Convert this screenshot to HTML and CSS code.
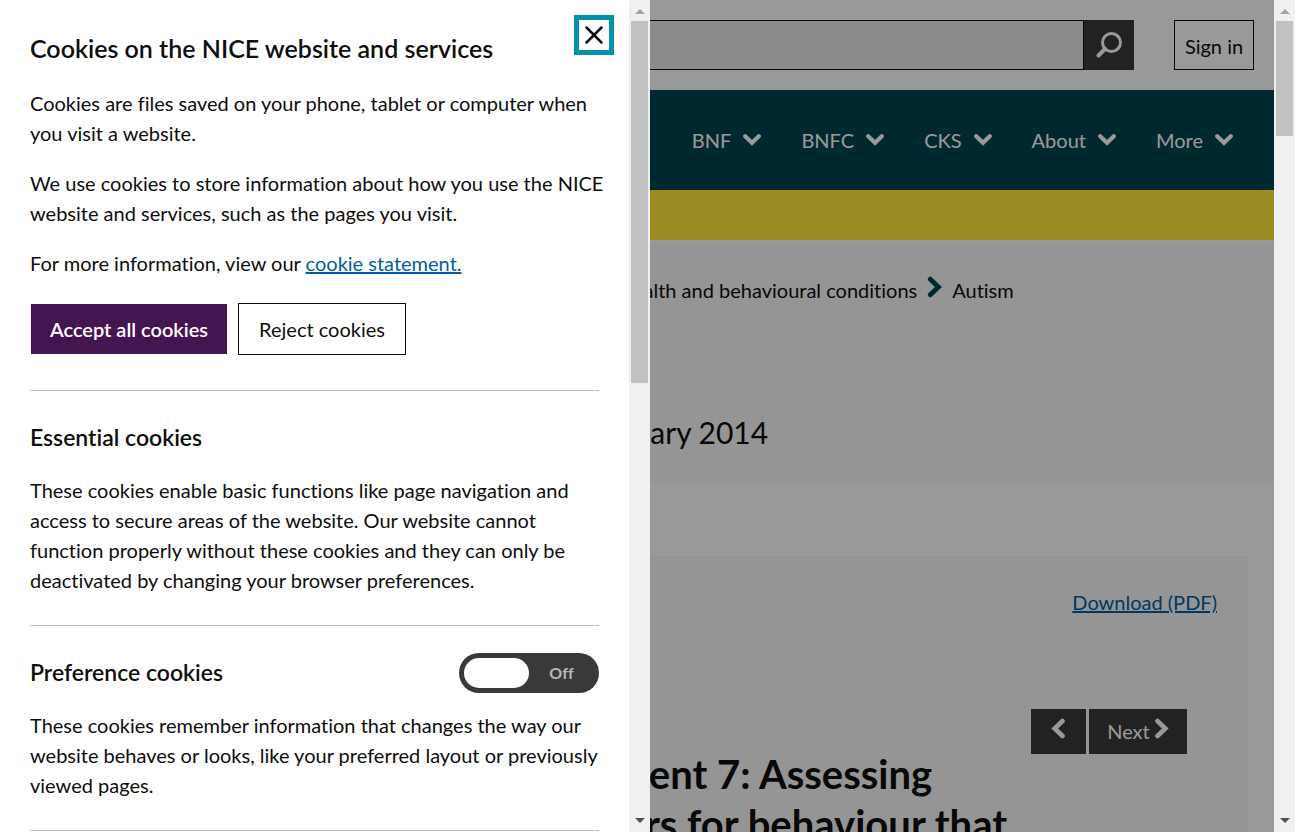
FILE: index.html
```
<!DOCTYPE html>
<html lang="en">
<head>
<meta charset="utf-8">
<meta name="viewport" content="width=device-width, initial-scale=1">
<title>Autism | Quality standard | NICE</title>
<link rel="stylesheet" href="styles.css">
</head>
<body>
<svg class="sprite" aria-hidden="true">
  <symbol id="chevron" viewBox="0 0 18 12"><path d="M2.2 2.2 9 8.8l6.800-6.600" fill="none" stroke="currentColor" stroke-width="4.200" stroke-linecap="round"/></symbol>
  <symbol id="chevron-right" viewBox="0 0 14 21"><path d="M3 3l7.800 7.500L3 18" fill="none" stroke="currentColor" stroke-width="4.600" stroke-linecap="round"/></symbol>
</svg>
<div class="window">
  <div class="page">
    <header class="masthead">
      <form class="search">
        <input class="search-box" type="search" aria-label="Search NICE">
        <button class="search-button" type="submit" aria-label="Search">
          <svg width="26" height="26" viewBox="0 0 26 26" fill="none" stroke="currentColor"><circle cx="15.500" cy="10.500" r="9" stroke-width="3"/><path d="M9 17 2.500 23.500" stroke-width="4" stroke-linecap="round"/></svg>
        </button>
      </form>
      <a class="sign-in" href="#">Sign in</a>
    </header>
    <nav class="nav" aria-label="Main">
      <button class="nav-item" type="button">BNF <svg class="chevron"><use href="#chevron"/></svg></button>
      <button class="nav-item" type="button">BNFC <svg class="chevron"><use href="#chevron"/></svg></button>
      <button class="nav-item" type="button">CKS <svg class="chevron"><use href="#chevron"/></svg></button>
      <button class="nav-item" type="button">About <svg class="chevron"><use href="#chevron"/></svg></button>
      <button class="nav-item" type="button">More <svg class="chevron"><use href="#chevron"/></svg></button>
    </nav>
    <div class="notice"></div>
    <div class="page-header">
      <div class="crumbs">
        <a class="crumb" href="#">Mental health and behavioural conditions</a>
        <svg class="crumb-arrow"><use href="#chevron-right"/></svg>
        <span>Autism</span>
      </div>
      <p class="published">Published: 23 January 2014</p>
    </div>
    <main class="panel">
      <div class="download"><a class="link" href="#">Download (PDF)</a></div>
      <div class="pager">
        <a class="pager-link" href="#" aria-label="Previous"><svg class="pager-arrow pager-arrow-back"><use href="#chevron-right"/></svg></a>
        <a class="pager-link pager-next" href="#">Next <svg class="pager-arrow"><use href="#chevron-right"/></svg></a>
      </div>
      <h1 class="statement">Quality statement 7: Assessing<br>possible triggers for behaviour that</h1>
    </main>
  </div>
  <div class="scrollbar" aria-hidden="true"><span class="arrow-up"></span><span class="thumb page-thumb"></span><span class="arrow-down"></span></div>
  <div class="overlay"></div>
</div>
<div class="drawer" role="dialog" aria-labelledby="cookie-title">
  <div class="drawer-body">
    <button class="close" type="button" aria-label="Close"><svg width="20" height="20" viewBox="0 0 20 20" fill="none" stroke="currentColor" stroke-width="2.500" stroke-linecap="round"><path d="M2.500 2.500l15 15M17.500 2.500l-15 15"/></svg></button>
    <h2 class="title" id="cookie-title">Cookies on the NICE website and services</h2>
    <p class="text">Cookies are files saved on your phone, tablet or computer when you visit a website.</p>
    <p class="text wide">We use cookies to store information about how you use the NICE website and services, such as the pages you visit.</p>
    <p class="text">For more information, view our <a class="link" href="#">cookie statement.</a></p>
    <div class="actions">
      <button class="button accept" type="button">Accept all cookies</button>
      <button class="button reject" type="button">Reject cookies</button>
    </div>
    <section class="section">
      <h3 class="section-title">Essential cookies</h3>
      <p class="text">These cookies enable basic functions like page navigation and access to secure areas of the website. Our website cannot function properly without these cookies and they can only be deactivated by changing your browser preferences.</p>
    </section>
    <section class="section">
      <div class="section-head">
        <h3 class="section-title" id="pref">Preference cookies</h3>
        <label class="toggle"><input class="toggle-input" type="checkbox" aria-labelledby="pref"><span class="toggle-state">Off</span></label>
      </div>
      <p class="text">These cookies remember information that changes the way our website behaves or looks, like your preferred layout or previously viewed pages.</p>
    </section>
    <section class="section"></section>
  </div>
  <div class="scrollbar" aria-hidden="true"><span class="arrow-up"></span><span class="thumb drawer-thumb"></span><span class="arrow-down"></span></div>
</div>
</body>
</html>
```
FILE: styles.css
```
* { box-sizing: border-box; }
body { margin: 0; height: 100vh; overflow: hidden; font: 20px/30px Lato, "Liberation Sans", sans-serif; font-variant-ligatures: none; color: #0e0e0e; background: #fff; }
button, input { font: inherit; font-variant-ligatures: none; color: inherit; margin: 0; border-radius: 0; }
h1, h2, h3, p { margin: 0; }
.sprite { position: absolute; width: 0; height: 0; }
.link { color: #005ea5; text-decoration: underline; }

.window { display: flex; height: 100vh; overflow: hidden; }
.page { flex: 1; min-width: 0; }
.overlay { position: fixed; inset: 0 21px 0 0; background: rgba(0, 0, 0, 0.4); }

.masthead { display: flex; gap: 40px; padding: 20px 20px 20px 200px; }
.search { display: flex; flex: 1; }
.search-box { flex: 1; min-width: 0; height: 50px; border: 1px solid #0e0e0e; background: #e8e8e8; appearance: none; }
.search-button { display: grid; place-items: center; width: 50px; border: 0; padding: 0; background: #393939; color: #fff; }
.sign-in { border: 1px solid #0e0e0e; width: 80px; text-align: center; line-height: 50px; height: 50px; color: inherit; text-decoration: none; }

.nav { display: flex; justify-content: flex-end; gap: 40px; height: 100px; padding: 0 41px; background: #00454f; color: #fff; }
.nav-item { display: flex; align-items: center; gap: 12px; border: 0; padding: 0; background: none; }
.chevron { width: 18px; height: 12px; }
.notice { height: 50px; background: #ffe93c; }

.page-header { margin-top: 5px; padding: 30px 30px 30px 405px; background: #f8f8f8; height: 237px; }
.crumbs { display: flex; gap: 10px; white-space: nowrap; padding-left: 150px; }
.crumb { color: inherit; text-decoration: none; }
.crumb-arrow { width: 15px; height: 22px; margin-top: 1px; color: #00454f; }
.published { margin-top: 104px; font-size: 30px; line-height: 46px; }

.panel { margin: 74px 27px 0; padding: 30px 29px; min-height: 400px; border: 1px solid #f2f2f2; background: #f8f8f8; }
.download { text-align: right; }
.pager { display: flex; justify-content: flex-end; gap: 3px; margin-top: 92px; padding-right: 30px; }
.pager-link { display: flex; justify-content: center; width: 55px; height: 45px; background: #393939; color: #fff; text-decoration: none; line-height: 44px; }
.pager-next { width: 98px; gap: 4px; }
.pager-arrow { width: 15px; height: 21px; margin-top: 9px; }
.pager-arrow-back { transform: rotate(180deg); }
.statement { margin-top: -5px; font-size: 40px; line-height: 50px; font-weight: 700; white-space: nowrap; padding-left: 330px; }

.drawer { position: fixed; inset: 0 auto 0 0; display: flex; width: 100%; max-width: 650px; background: #fff; }
.drawer-body { position: relative; flex: 1; min-width: 0; padding: 28px 30px 0; overflow: hidden; }
.close { position: absolute; top: 15px; right: 15px; display: grid; place-items: center; width: 40px; height: 40px; padding: 0; border: 5px solid #0092a8; background: #fff; }
.title { font-size: 25px; line-height: 40px; font-weight: 600; margin-bottom: 20px; }
.text + .text { margin-top: 20px; }
.wide { margin-right: -20px; }
.actions { display: flex; align-items: center; gap: 11px; margin: 25px 0 35px; }
.button { padding: 0 20px; }
.accept { height: 50px; margin-left: 1px; padding: 0 19px; border: 0; background: #451551; color: #fff; font-weight: 600; }
.reject { height: 52px; border: 1px solid #0e0e0e; background: #fff; }
.section { border-top: 1px solid #bebebe; padding: 27px 0 30px; }
.section-head { display: flex; justify-content: space-between; align-items: flex-start; margin-bottom: -2px; }
.section-title { font-size: 23px; line-height: 38px; font-weight: 600; }
.section .text { margin-top: 19px; }
.toggle { display: flex; align-items: center; width: 140px; height: 40px; padding: 5px; border-radius: 20px; background: #393939; }
.toggle-input { appearance: none; width: 65px; height: 30px; border-radius: 15px; background: #fff; }
.toggle-state { flex: 1; text-align: center; font-size: 16px; font-weight: 700; color: #b8b8b8; }

.scrollbar { display: flex; flex-direction: column; align-items: center; flex: none; width: 21px; background: #f0f0f0; }
.arrow-up { border: 5px solid transparent; border-top: 0; border-bottom-color: #a3a3a3; margin: 9px 0 7px; }
.arrow-down { border: 5px solid transparent; border-bottom: 0; border-top-color: #505050; margin: auto 0 9px; }
.thumb { width: 17px; background: #c1c1c1; }
.page-thumb { height: 115px; }
.drawer-thumb { height: 362px; }
```
